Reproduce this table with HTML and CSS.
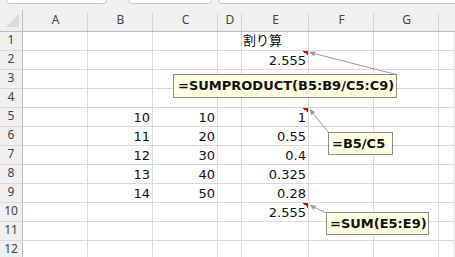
FILE: index.html
```html
<!DOCTYPE html>
<html lang="ja">
<head>
<meta charset="utf-8">
<title>割り算</title>
<link rel="stylesheet" href="styles.css">
</head>
<body>
<div class="topbar">
  <div class="tab tab1"></div>
  <div class="tab tab2"></div>
  <div class="tab tab3"></div>
</div>
<div class="sheet">
  <div class="corner"></div><div class="ch">A</div><div class="ch">B</div><div class="ch">C</div><div class="ch">D</div><div class="ch">E</div><div class="ch">F</div><div class="ch">G</div><div class="ch last"></div>

  <div class="rh">1</div><div class="c"></div><div class="c"></div><div class="c"></div><div class="c"></div><div class="c jp">割り算</div><div class="c"></div><div class="c"></div><div class="c"></div>
  <div class="rh">2</div><div class="c"></div><div class="c"></div><div class="c"></div><div class="c"></div><div class="c n note">2.555</div><div class="c"></div><div class="c"></div><div class="c"></div>
  <div class="rh">3</div><div class="c"></div><div class="c"></div><div class="c"></div><div class="c"></div><div class="c"></div><div class="c"></div><div class="c"></div><div class="c"></div>
  <div class="rh">4</div><div class="c"></div><div class="c"></div><div class="c"></div><div class="c"></div><div class="c"></div><div class="c"></div><div class="c"></div><div class="c"></div>
  <div class="rh">5</div><div class="c"></div><div class="c n">10</div><div class="c n">10</div><div class="c"></div><div class="c n note">1</div><div class="c"></div><div class="c"></div><div class="c"></div>
  <div class="rh">6</div><div class="c"></div><div class="c n">11</div><div class="c n">20</div><div class="c"></div><div class="c n">0.55</div><div class="c"></div><div class="c"></div><div class="c"></div>
  <div class="rh">7</div><div class="c"></div><div class="c n">12</div><div class="c n">30</div><div class="c"></div><div class="c n">0.4</div><div class="c"></div><div class="c"></div><div class="c"></div>
  <div class="rh">8</div><div class="c"></div><div class="c n">13</div><div class="c n">40</div><div class="c"></div><div class="c n">0.325</div><div class="c"></div><div class="c"></div><div class="c"></div>
  <div class="rh">9</div><div class="c"></div><div class="c n">14</div><div class="c n">50</div><div class="c"></div><div class="c n">0.28</div><div class="c"></div><div class="c"></div><div class="c"></div>
  <div class="rh">10</div><div class="c"></div><div class="c"></div><div class="c"></div><div class="c"></div><div class="c n note">2.555</div><div class="c"></div><div class="c"></div><div class="c"></div>
  <div class="rh">11</div><div class="c"></div><div class="c"></div><div class="c"></div><div class="c"></div><div class="c"></div><div class="c"></div><div class="c"></div><div class="c"></div>
  <div class="rh">12</div><div class="c"></div><div class="c"></div><div class="c"></div><div class="c"></div><div class="c"></div><div class="c"></div><div class="c"></div><div class="c"></div>
</div>

<svg class="arrows" width="455" height="257" viewBox="0 0 455 257">
  <g stroke="#9a9a9a" stroke-width="1" fill="none">
    <line x1="312" y1="53" x2="396" y2="74.5"/>
    <line x1="311.5" y1="111.5" x2="328.5" y2="132.5"/>
    <line x1="312" y1="206.2" x2="326.5" y2="213"/>
  </g>
  <g fill="#9a9a9a">
    <polygon points="309,52.3 314.2,56.2 315.4,51.3"/>
    <polygon points="309.5,109 311.3,115.3 315.2,112.1"/>
    <polygon points="309.5,205 313.8,209.9 316,205.4"/>
  </g>
</svg>

<div class="comment c1">=SUMPRODUCT(B5:B9/C5:C9)</div>
<div class="comment c2">=B5/C5</div>
<div class="comment c3">=SUM(E5:E9)</div>
</body>
</html>
```

FILE: styles.css
```css
html, body {
  margin: 0;
  padding: 0;
}
body {
  position: relative;
  width: 455px;
  height: 257px;
  overflow: hidden;
  background: #ffffff;
  font-family: "DejaVu Sans", sans-serif;
}

.topbar {
  display: flex;
  height: 4px;
  overflow: hidden;
  background: #f0f0f0;
}
.tab {
  box-sizing: border-box;
  height: 12px;
  margin-top: -8px;
  border: 1px solid #c8c8c8;
  border-radius: 4px;
  background: #ffffff;
}
.tab1 { margin-left: 6px; width: 101px; }
.tab2 { margin-left: 21px; width: 84px; }
.tab3 { margin-left: 6px; flex: 1; margin-right: -10px; }

.sheet {
  display: grid;
  grid-template-columns: 23px 65px 65px 65px 24px 67px 65px 65px 1fr;
  grid-template-rows: 28px repeat(12, 19px);
}

.corner {
  box-sizing: border-box;
  background-color: #f0f0f0;
  background-image:
    linear-gradient(#bdbdbd, #bdbdbd),
    linear-gradient(to top left, #dcdcdc 50%, transparent 50%);
  background-repeat: no-repeat;
  background-position: right bottom, 5px 10px;
  background-size: 1px 21px, 14px 13px;
  border-bottom: 1px solid #bdbdbd;
}

.ch {
  box-sizing: border-box;
  background-color: #f0f0f0;
  background-image: linear-gradient(#d4d4d4, #d4d4d4);
  background-repeat: no-repeat;
  background-position: right bottom;
  background-size: 1px 18px;
  border-bottom: 1px solid #bdbdbd;
  padding-top: 4px;
  line-height: 23px;
  text-align: center;
  font-family: "Noto Sans", sans-serif;
  font-size: 12px;
  color: #444444;
}
.ch.last { background-image: none; }

.rh {
  box-sizing: border-box;
  background: #f0f0f0;
  border-right: 1px solid #bdbdbd;
  border-bottom: 1px solid #d9d9d9;
  line-height: 16px;
  text-align: center;
  font-family: "Noto Sans", sans-serif;
  font-size: 12px;
  color: #444444;
}

.c {
  box-sizing: border-box;
  border-right: 1px solid #dadada;
  border-bottom: 1px solid #dadada;
  font-size: 13px;
  color: #111111;
  padding: 2px 2px 0 1px;
  line-height: 16px;
  white-space: nowrap;
}
.c.n { text-align: right; }
.c.jp {
  font-family: "Noto Sans CJK JP", sans-serif;
  font-size: 13px;
  padding-top: 0;
  line-height: 16px;
}
.c.note {
  background-image: linear-gradient(to bottom left, #e00000 50%, transparent 50%);
  background-repeat: no-repeat;
  background-position: right top;
  background-size: 5px 5px;
}

.arrows {
  position: absolute;
  left: 0;
  top: 0;
  pointer-events: none;
}

.comment {
  position: absolute;
  box-sizing: border-box;
  background: #ffffe1;
  border: 1px solid #8c8c8c;
  font-family: "DejaVu Sans", sans-serif;
  font-weight: bold;
  font-size: 13px;
  color: #111111;
  white-space: nowrap;
  padding-left: 3px;
  line-height: 21px;
}
.c1 { left: 173px; top: 74px; width: 224px; height: 24px; line-height: 22px; padding-left: 4px; }
.c2 { left: 328px; top: 132px; width: 65px; height: 23px; }
.c3 { left: 326px; top: 212px; width: 103px; height: 23px; }
```
